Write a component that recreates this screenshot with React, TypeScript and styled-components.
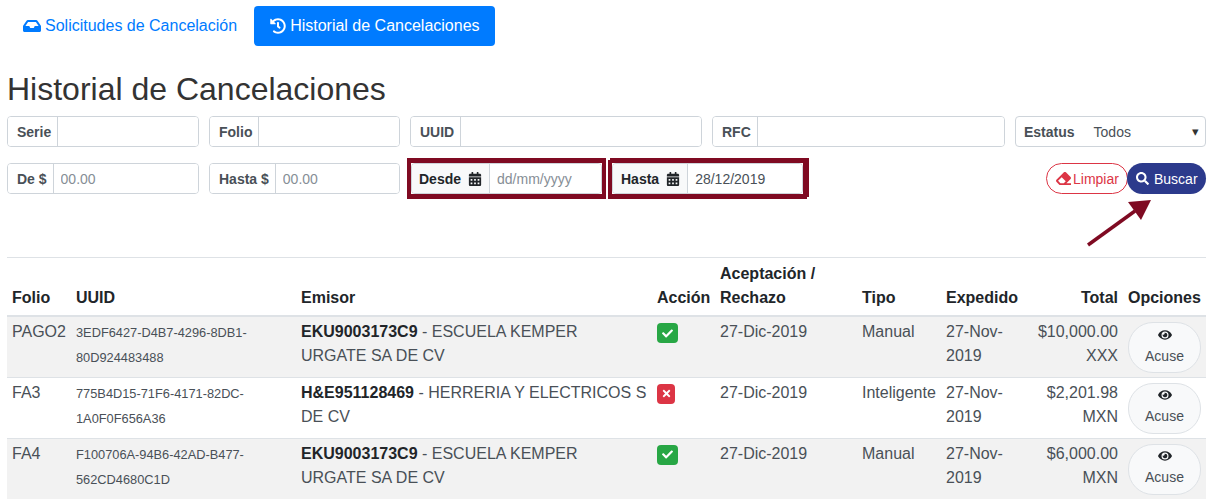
import React from 'react'
import styled, { createGlobalStyle } from 'styled-components'
import { FaCalendarAlt, FaCheck, FaEraser, FaEye, FaHistory, FaInbox, FaSearch, FaTimes } from 'react-icons/fa'

const GlobalStyle = createGlobalStyle`
  html, body { margin: 0; padding: 0; background: #fff; }
  body {
    font-family: "Liberation Sans", Arial, sans-serif;
    font-size: 16px;
    line-height: 24px;
    color: #212529;
    overflow: hidden;
  }
  * { box-sizing: border-box; }
`

const rows = [
  {
    folio: 'PAGO2',
    uuid: '3EDF6427-D4B7-4296-8DB1-80D924483488',
    rfc: 'EKU9003173C9',
    name: 'ESCUELA KEMPER URGATE SA DE CV',
    ok: true,
    date: '27-Dic-2019',
    tipo: 'Manual',
    total: '$10,000.00 XXX',
  },
  {
    folio: 'FA3',
    uuid: '775B4D15-71F6-4171-82DC-1A0F0F656A36',
    rfc: 'H&E951128469',
    name: 'HERRERIA Y ELECTRICOS S DE CV',
    ok: false,
    date: '27-Dic-2019',
    tipo: 'Inteligente',
    total: '$2,201.98 MXN',
  },
  {
    folio: 'FA4',
    uuid: 'F100706A-94B6-42AD-B477-562CD4680C1D',
    rfc: 'EKU9003173C9',
    name: 'ESCUELA KEMPER URGATE SA DE CV',
    ok: true,
    date: '27-Dic-2019',
    tipo: 'Manual',
    total: '$6,000.00 MXN',
  },
]

const TextField = ({ label, placeholder, width }: { label: string; placeholder?: string; width: number }) => (
  <Group $width={width}>
    <Addon>{label}</Addon>
    <Field placeholder={placeholder} readOnly />
  </Group>
)

const DateField = ({ label, value, wide }: { label: string; value?: string; wide?: boolean }) => (
  <Highlight $wide={wide}>
    <Group $width={191}>
      <DateAddon $wide={wide}>
        {label} <FaCalendarAlt size={14} />
      </DateAddon>
      <Field placeholder="dd/mm/yyyy" value={value ?? ''} readOnly />
    </Group>
  </Highlight>
)

export default function App() {
  return (
    <Page>
      <GlobalStyle />
      <Tabs>
        <Tab>
          <FaInbox size={18} /> Solicitudes de Cancelación
        </Tab>
        <Tab $active>
          <FaHistory size={16} /> Historial de Cancelaciones
        </Tab>
      </Tabs>
      <Title>Historial de Cancelaciones</Title>
      <FilterRow>
        <TextField label="Serie" width={192} />
        <TextField label="Folio" width={191} />
        <TextField label="UUID" width={292} />
        <TextField label="RFC" width={293} />
        <Group $width={191}>
          <StatusLabel>Estatus</StatusLabel>
          <StatusValue>Todos</StatusValue>
          <Caret>▾</Caret>
        </Group>
      </FilterRow>
      <FilterRow>
        <TextField label="De $" placeholder="00.00" width={192} />
        <TextField label="Hasta $" placeholder="00.00" width={191} />
        <DateField label="Desde" />
        <DateField label="Hasta" value="28/12/2019" wide />
        <Actions>
          <ClearButton>
            <FaEraser size={15} /> Limpiar
          </ClearButton>
          <SearchButton>
            <FaSearch size={13} /> Buscar
          </SearchButton>
        </Actions>
        <Arrow width="70" height="52" viewBox="0 0 70 52">
          <line x1="3" y1="49" x2="50" y2="15" stroke="#7f0a22" strokeWidth="3.5" />
          <polygon points="66,4 43,6 56,24" fill="#7f0a22" />
        </Arrow>
      </FilterRow>
      <Rule />
      <Table>
        <colgroup>
          <col width={64} />
          <col width={225} />
          <col width={356} />
          <col width={63} />
          <col width={142} />
          <col width={84} />
          <col width={82} />
          <col width={100} />
          <col width={83} />
        </colgroup>
        <thead>
          <tr>
            <Th>Folio</Th>
            <Th>UUID</Th>
            <Th>Emisor</Th>
            <Th>Acción</Th>
            <Th>Aceptación / Rechazo</Th>
            <Th>Tipo</Th>
            <Th>Expedido</Th>
            <Th $right>Total</Th>
            <Th>Opciones</Th>
          </tr>
        </thead>
        <tbody>
          {rows.map((row) => (
            <Row key={row.folio}>
              <Td>{row.folio}</Td>
              <Td>
                <Uuid>{row.uuid}</Uuid>
              </Td>
              <Td>
                <strong>{row.rfc}</strong> - {row.name}
              </Td>
              <Td>
                <Badge $ok={row.ok}>{row.ok ? <FaCheck size={11} /> : <FaTimes size={11} />}</Badge>
              </Td>
              <Td>{row.date}</Td>
              <Td>{row.tipo}</Td>
              <Td>27-Nov-2019</Td>
              <Td $right>{row.total}</Td>
              <Td>
                <AcuseButton>
                  <FaEye size={14} />
                  <span>Acuse</span>
                </AcuseButton>
              </Td>
            </Row>
          ))}
        </tbody>
      </Table>
    </Page>
  )
}

const Page = styled.div`
  width: 1218px;
  height: 499px;
  padding: 6px 12px 0 7px;
  overflow: hidden;
`

const Tabs = styled.nav`
  display: flex;
  gap: 1px;
`

const Tab = styled.a<{ $active?: boolean }>`
  display: flex;
  align-items: center;
  gap: 4px;
  height: 40px;
  padding: 0 ${({ $active }) => ($active ? '15px' : '16px')} 0 16px;
  border-radius: 4px;
  color: ${({ $active }) => ($active ? '#fff' : '#007bff')};
  background: ${({ $active }) => ($active ? '#007bff' : 'transparent')};
`

const Title = styled.h1`
  margin: 24px 0 8px;
  font-size: 32px;
  line-height: 38px;
  font-weight: 400;
  color: #333;
`

const FilterRow = styled.div`
  position: relative;
  display: flex;
  align-items: center;
  gap: 10px;
  margin-bottom: 16px;
  height: 31px;
`

const Group = styled.div<{ $width: number }>`
  display: flex;
  align-items: stretch;
  flex: none;
  width: ${({ $width }) => $width}px;
  height: 31px;
  border: 1px solid #ced4da;
  border-radius: 4px;
  background: #fff;
  font-size: 14px;
  overflow: hidden;
`

const Addon = styled.span`
  display: flex;
  align-items: center;
  padding: 0 6px 0 9px;
  font-weight: 700;
  color: #495057;
  background: #fff;
  border-right: 1px solid #ced4da;
  white-space: nowrap;
`

const DateAddon = styled(Addon)<{ $wide?: boolean }>`
  gap: 7px;
  padding: 0 7px 0 ${({ $wide }) => ($wide ? '8px' : '7px')};
  color: #212529;
  background: #f8f9fa;
`

const Field = styled.input`
  flex: 1;
  min-width: 0;
  padding: 0 7px;
  border: 0;
  outline: 0;
  font: inherit;
  color: #495057;
  &::placeholder {
    color: #868e96;
  }
`

const Highlight = styled.div<{ $wide?: boolean }>`
  flex: none;
  margin-left: ${({ $wide }) => ($wide ? '0' : '1px')};
  box-shadow:
    0 1px 0 4px #7f0a22,
    ${({ $wide }) => ($wide ? '2px' : '0')} -1px 0 4px #7f0a22;
`

const StatusLabel = styled.span`
  display: flex;
  align-items: center;
  padding-left: 8px;
  font-weight: 700;
  color: #495057;
`

const StatusValue = styled.span`
  display: flex;
  align-items: center;
  flex: 1;
  margin-left: 19px;
  color: #495057;
`

const Caret = styled.span`
  display: flex;
  align-items: center;
  padding-right: 6px;
  font-size: 13px;
  color: #333;
`

const Actions = styled.div`
  display: flex;
  margin-left: auto;
`

const ClearButton = styled.button`
  display: flex;
  align-items: center;
  gap: 2px;
  height: 31px;
  width: 82px;
  padding: 0 0 0 9px;
  margin-right: -1px;
  border: 1px solid #dc3545;
  border-radius: 16px;
  background: #fff;
  color: #dc3545;
  font: inherit;
  font-size: 14px;
`

const SearchButton = styled.button`
  display: flex;
  align-items: center;
  gap: 5px;
  height: 31px;
  width: 79px;
  padding: 0 0 0 9px;
  border: 0;
  border-radius: 16px;
  background: #2c3a8c;
  color: #fff;
  font: inherit;
  font-size: 14px;
`

const Arrow = styled.svg`
  position: absolute;
  left: 1078px;
  top: 33px;
`

const Rule = styled.hr`
  margin: 63px 0 0;
  border: 0;
  border-top: 1px solid #dee2e6;
`

const Table = styled.table`
  width: 1199px;
  table-layout: fixed;
  border-collapse: collapse;
`

const Th = styled.th<{ $right?: boolean }>`
  padding: 4px 5px 5px;
  text-align: ${({ $right }) => ($right ? 'right' : 'left')};
  vertical-align: bottom;
  border-bottom: 2px solid #dee2e6;
`

const Row = styled.tr`
  &:nth-child(odd) {
    background: #f2f2f2;
  }
  border-bottom: 1px solid #dee2e6;
`

const Td = styled.td<{ $right?: boolean }>`
  height: 61px;
  padding: 3px 5px;
  vertical-align: top;
  color: #495057;
  text-align: ${({ $right }) => ($right ? 'right' : 'left')};
  strong {
    color: #212529;
  }
`

const Uuid = styled.span`
  font-size: 12.8px;
`

const Badge = styled.span<{ $ok: boolean }>`
  display: inline-flex;
  align-items: center;
  justify-content: center;
  width: ${({ $ok }) => ($ok ? '21px' : '18px')};
  height: 20px;
  margin-top: 3px;
  border-radius: 4px;
  color: #fff;
  background: ${({ $ok }) => ($ok ? '#28a745' : '#dc3545')};
`

const AcuseButton = styled.button`
  display: flex;
  flex-direction: column;
  align-items: center;
  justify-content: center;
  gap: 2px;
  width: 73px;
  height: 51px;
  margin-top: 2px;
  padding: 0;
  border: 1px solid #dee2e6;
  border-radius: 25px;
  background: #f8f9fa;
  color: #495057;
  font: inherit;
  font-size: 14px;
  svg {
    color: #212529;
  }
`
